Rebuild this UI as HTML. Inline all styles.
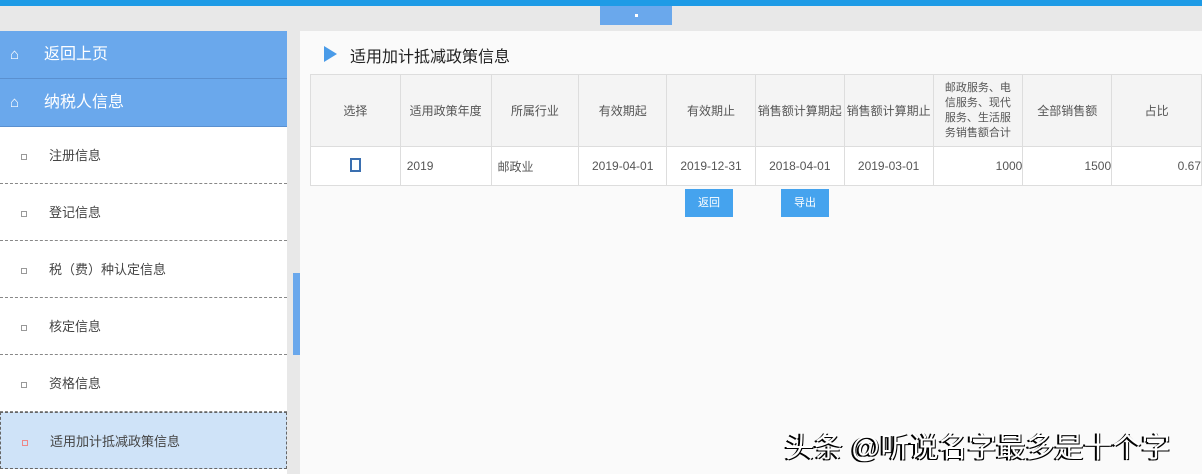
<!DOCTYPE html>
<html><head><meta charset="utf-8"><style>
*{margin:0;padding:0;box-sizing:border-box}
body{width:1202px;height:474px;overflow:hidden;background:#e8e8e8;font-family:"Liberation Sans","Noto Sans CJK SC",sans-serif;position:relative;color:#333}
.topbar{position:absolute;left:0;top:0;width:1202px;height:6px;background:#1e9be6}
.tab{position:absolute;left:600px;top:6px;width:72px;height:19px;background:#6aa8ec}
.tab:after{content:"";position:absolute;left:35px;top:8px;width:3px;height:3px;background:#fff}
.side{position:absolute;left:0;top:31px;width:287px;height:443px;background:#fff}
.bi{height:48px;background:#6aa8ec;color:#fff;font-size:16px;line-height:47px;padding-left:44px;position:relative;border-bottom:1px solid #5a90d0}
.bi:before{content:"⌂";position:absolute;left:10px;font-size:15px}
.wi{height:57px;border-bottom:1px dashed #888;font-size:13px;line-height:57px;padding-left:49px;position:relative;color:#444}
.wi:before{content:"";position:absolute;left:21px;top:27px;width:4px;height:4px;border:1px solid #999}
.sel{background:#cfe3f8;border:1px dashed #666}
.sel:before{border-color:#e88}
.coll{position:absolute;left:293px;top:273px;width:13px;height:82px;background:#6aa8ec}
.main{position:absolute;left:300px;top:31px;width:902px;height:443px;background:#fafafa}
.title{position:absolute;left:50px;top:12px;font-size:16px;color:#222}
.tri{position:absolute;left:24px;top:15px;width:0;height:0;border-left:13px solid #4a9be8;border-top:8px solid transparent;border-bottom:8px solid transparent}
table{position:absolute;left:10px;top:43px;border-collapse:collapse;font-size:12px;color:#555}
td{border:1px solid #ddd;text-align:center;background:#f8f8f8}
tr.h td{height:72px;background:#f4f4f4}
tr.d td{height:39px;background:#fff}
.btn{position:absolute;top:158px;width:48px;height:28px;background:#45a3ee;color:#fff;font-size:11px;text-align:center;line-height:28px}
.wm{position:absolute;left:785px;top:424px;font-size:29px;color:#fff;text-shadow:-2px 1px 0 #000,1px 1px 0 #000;white-space:nowrap}
</style></head><body>
<div class="topbar"></div><div class="tab"></div>
<div class="side">
<div class="bi">返回上页</div>
<div class="bi">纳税人信息</div>
<div class="wi">注册信息</div>
<div class="wi">登记信息</div>
<div class="wi">税（费）种认定信息</div>
<div class="wi">核定信息</div>
<div class="wi">资格信息</div>
<div class="wi sel">适用加计抵减政策信息</div>
</div>
<div class="coll"></div>
<div class="main">
<div class="tri"></div><div class="title">适用加计抵减政策信息</div>
<table>
<tr class="h"><td style="width:90px">选择</td><td style="width:91px">适用政策年度</td><td style="width:88px">所属行业</td><td style="width:88px">有效期起</td><td style="width:89px">有效期止</td><td style="width:89px">销售额计算期起</td><td style="width:89px">销售额计算期止</td><td style="width:90px;font-size:11px;padding:0 10px;line-height:15px">邮政服务、电信服务、现代服务、生活服务销售额合计</td><td style="width:89px">全部销售额</td><td style="width:90px">占比</td></tr>
<tr class="d"><td><span style="display:inline-block;width:11px;height:14px;border:2px solid #3a6fb0"></span></td><td style="text-align:left;padding-left:6px">2019</td><td style="text-align:left;padding-left:6px">邮政业</td><td>2019-04-01</td><td>2019-12-31</td><td>2018-04-01</td><td>2019-03-01</td><td style="text-align:right">1000</td><td style="text-align:right">1500</td><td style="text-align:right">0.67</td></tr>
</table>
<div class="btn" style="left:385px">返回</div>
<div class="btn" style="left:481px">导出</div>
</div>
<div class="wm">头条 @听说名字最多是十个字</div>
</body></html>
